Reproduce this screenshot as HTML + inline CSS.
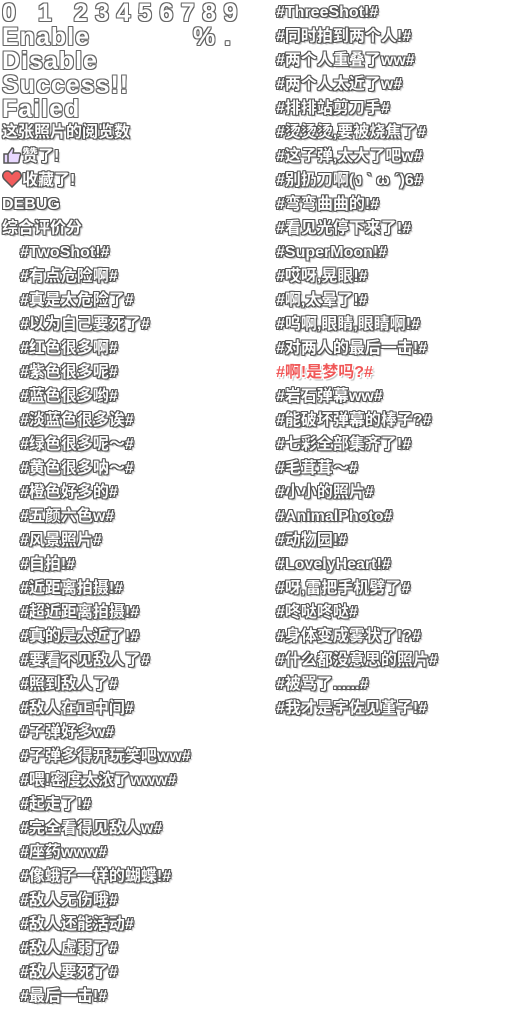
<!DOCTYPE html>
<html><head><meta charset="utf-8"><style>
html,body{margin:0;padding:0;background:#fff;width:512px;height:1024px;overflow:hidden}
body{position:relative;font-family:"Liberation Sans","Noto Sans CJK SC",sans-serif}
.t{position:absolute;font-size:16px;line-height:24px;height:24px;white-space:nowrap;color:#fff;font-weight:bold;margin-top:1px;
text-shadow:-1px -1px 0 #555,1px -1px 0 #555,-1px 1px 0 #555,1px 1px 0 #555,0 -1px 0 #555,0 1px 0 #555,-1px 0 0 #555,1px 0 0 #555,2px 2px 1px #bbb}
.red{color:#f05858;text-shadow:-1px -1px 0 #fff,1px -1px 0 #fff,-1px 1px 0 #fff,1px 1px 0 #fff,2px 2px 1px #bbb}
.big{position:absolute;font-size:25px;line-height:24px;color:#fff;font-weight:bold;letter-spacing:1px;
text-shadow:-1px -1px 0 #666,1px -1px 0 #666,-1px 1px 0 #666,1px 1px 0 #666,0 -1px 0 #666,0 1px 0 #666,-1px 0 0 #666,1px 0 0 #666}
</style></head><body>
<div class="big" style="left:2px;top:1px;letter-spacing:7.5px">0 1 23456789</div>
<div class="big" style="left:2px;top:25px">Enable</div>
<div class="big" style="left:193px;top:25px">% .</div>
<div class="big" style="left:2px;top:49px">Disable</div>
<div class="big" style="left:2px;top:73px">Success!!</div>
<div class="big" style="left:2px;top:97px">Failed</div>
<div class="t" style="left:2px;top:120px">这张照片的阅览数</div>
<div class="t" style="left:2px;top:144px"><svg width="20" height="18" viewBox="0 0 20 18" style="vertical-align:-3px"><path d="M2 8h4v9H2zM6 8l4-6c2 0 2 2 1 5h6c2 0 2 2 1 3l-1 6c0 1-1 1-2 1H6z" fill="#e8d8ff" stroke="#555" stroke-width="1.5"/></svg>赞了!</div>
<div class="t" style="left:2px;top:168px"><svg width="20" height="18" viewBox="0 0 20 18" style="vertical-align:-3px"><path d="M10 17L2 9C-1 5 2 1 5.5 1 8 1 9 3 10 4c1-1 2-3 4.5-3C18 1 21 5 18 9z" fill="#f25c5c" stroke="#555" stroke-width="1.5"/></svg>收藏了!</div>
<div class="t" style="left:2px;top:192px">DEBUG</div>
<div class="t" style="left:2px;top:216px">综合评价分</div>
<div class="t" style="left:20px;top:240px">#TwoShot!#</div>
<div class="t" style="left:20px;top:264px">#有点危险啊#</div>
<div class="t" style="left:20px;top:288px">#真是太危险了#</div>
<div class="t" style="left:20px;top:312px">#以为自己要死了#</div>
<div class="t" style="left:20px;top:336px">#红色很多啊#</div>
<div class="t" style="left:20px;top:360px">#紫色很多呢#</div>
<div class="t" style="left:20px;top:384px">#蓝色很多哟#</div>
<div class="t" style="left:20px;top:408px">#淡蓝色很多诶#</div>
<div class="t" style="left:20px;top:432px">#绿色很多呢～#</div>
<div class="t" style="left:20px;top:456px">#黄色很多呐～#</div>
<div class="t" style="left:20px;top:480px">#橙色好多的#</div>
<div class="t" style="left:20px;top:504px">#五颜六色w#</div>
<div class="t" style="left:20px;top:528px">#风景照片#</div>
<div class="t" style="left:20px;top:552px">#自拍!#</div>
<div class="t" style="left:20px;top:576px">#近距离拍摄!#</div>
<div class="t" style="left:20px;top:600px">#超近距离拍摄!#</div>
<div class="t" style="left:20px;top:624px">#真的是太近了!#</div>
<div class="t" style="left:20px;top:648px">#要看不见敌人了#</div>
<div class="t" style="left:20px;top:672px">#照到敌人了#</div>
<div class="t" style="left:20px;top:696px">#敌人在正中间#</div>
<div class="t" style="left:20px;top:720px">#子弹好多w#</div>
<div class="t" style="left:20px;top:744px">#子弹多得开玩笑吧ww#</div>
<div class="t" style="left:20px;top:768px">#喂!密度太浓了www#</div>
<div class="t" style="left:20px;top:792px">#起走了!#</div>
<div class="t" style="left:20px;top:816px">#完全看得见敌人w#</div>
<div class="t" style="left:20px;top:840px">#座药www#</div>
<div class="t" style="left:20px;top:864px">#像蛾子一样的蝴蝶!#</div>
<div class="t" style="left:20px;top:888px">#敌人无伤哦#</div>
<div class="t" style="left:20px;top:912px">#敌人还能活动#</div>
<div class="t" style="left:20px;top:936px">#敌人虚弱了#</div>
<div class="t" style="left:20px;top:960px">#敌人要死了#</div>
<div class="t" style="left:20px;top:984px">#最后一击!#</div>

<div class="t" style="left:276px;top:0px">#ThreeShot!#</div>
<div class="t" style="left:276px;top:24px">#同时拍到两个人!#</div>
<div class="t" style="left:276px;top:48px">#两个人重叠了ww#</div>
<div class="t" style="left:276px;top:72px">#两个人太近了w#</div>
<div class="t" style="left:276px;top:96px">#排排站剪刀手#</div>
<div class="t" style="left:276px;top:120px">#烫烫烫,要被烧焦了#</div>
<div class="t" style="left:276px;top:144px">#这子弹,太大了吧w#</div>
<div class="t" style="left:276px;top:168px">#别扔刀啊(ง ˋ ω ˊ)6#</div>
<div class="t" style="left:276px;top:192px">#弯弯曲曲的!#</div>
<div class="t" style="left:276px;top:216px">#看见光停下来了!#</div>
<div class="t" style="left:276px;top:240px">#SuperMoon!#</div>
<div class="t" style="left:276px;top:264px">#哎呀,晃眼!#</div>
<div class="t" style="left:276px;top:288px">#啊,太晕了!#</div>
<div class="t" style="left:276px;top:312px">#呜啊,眼睛,眼睛啊!#</div>
<div class="t" style="left:276px;top:336px">#对两人的最后一击!#</div>
<div class="t red" style="left:276px;top:360px">#啊!是梦吗?#</div>
<div class="t" style="left:276px;top:384px">#岩石弹幕ww#</div>
<div class="t" style="left:276px;top:408px">#能破坏弹幕的棒子?#</div>
<div class="t" style="left:276px;top:432px">#七彩全部集齐了!#</div>
<div class="t" style="left:276px;top:456px">#毛茸茸～#</div>
<div class="t" style="left:276px;top:480px">#小小的照片#</div>
<div class="t" style="left:276px;top:504px">#AnimalPhoto#</div>
<div class="t" style="left:276px;top:528px">#动物园!#</div>
<div class="t" style="left:276px;top:552px">#LovelyHeart!#</div>
<div class="t" style="left:276px;top:576px">#呀,雷把手机劈了#</div>
<div class="t" style="left:276px;top:600px">#咚哒咚哒#</div>
<div class="t" style="left:276px;top:624px">#身体变成雾状了!?#</div>
<div class="t" style="left:276px;top:648px">#什么都没意思的照片#</div>
<div class="t" style="left:276px;top:672px">#被骂了......#</div>
<div class="t" style="left:276px;top:696px">#我才是宇佐见堇子!#</div>
</body></html>
